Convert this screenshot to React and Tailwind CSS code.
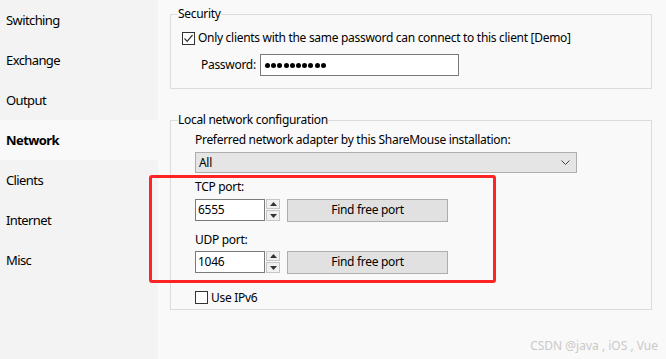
import React from 'react'

const navItems = ['Switching', 'Exchange', 'Output', 'Network', 'Clients', 'Internet', 'Misc']

function CheckBox({ checked }) {
  return (
    <span className="flex h-[13px] w-[13px] items-center justify-center border border-[#333333] bg-white">
      {checked && (
        <svg width="11" height="11" viewBox="0 0 11 11">
          <path d="M1.5 5.5 L4.2 8.3 L9.5 2" fill="none" stroke="#333333" strokeWidth="1.2" />
        </svg>
      )}
    </span>
  )
}

function Spinner() {
  return (
    <div className="ml-[1px] flex flex-col gap-[1px]">
      <div className="flex h-[10px] w-[14px] items-center justify-center border border-[#c6c6c6] bg-[#f0f0f0]">
        <svg width="7" height="4" viewBox="0 0 7 4"><path d="M0 4 L3.5 0 L7 4Z" fill="#333" /></svg>
      </div>
      <div className="flex h-[11px] w-[14px] items-center justify-center border border-[#c6c6c6] bg-[#f0f0f0]">
        <svg width="7" height="4" viewBox="0 0 7 4"><path d="M0 0 L3.5 4 L7 0Z" fill="#333" /></svg>
      </div>
    </div>
  )
}

function PortRow({ value }) {
  return (
    <div className="flex h-[22px] items-center">
      <div className="flex h-[22px] w-[70px] items-center border border-[#7a7a7a] bg-white pl-[2px]">{value}</div>
      <Spinner />
      <button className="ml-[7px] flex h-[23px] w-[161px] items-center justify-center border border-[#adadad] bg-[#e1e1e1]">
        Find free port
      </button>
    </div>
  )
}

export default function App() {
  const dots = Array.from({ length: 10 })

  return (
    <div
      className="relative flex h-[359px] w-[666px] overflow-hidden bg-[#f9f9f9] text-[12px] tracking-[-0.3px] text-black"
      style={{ fontFamily: '"Noto Sans", "Open Sans", sans-serif' }}
    >
      <div className="flex h-full w-[158px] shrink-0 flex-col bg-[#f3f3f3] text-[13px] tracking-[-0.6px]">
        {navItems.map((item) => (
          <div
            key={item}
            className={
              item === 'Network'
                ? 'flex h-[40px] items-center bg-[#f9f9f9] pl-[6px] pt-[2px] font-bold'
                : 'flex h-[40px] items-center pl-[6px] pt-[2px]'
            }
          >
            {item}
          </div>
        ))}
      </div>

      <div className="flex flex-1 flex-col pl-[12px] pr-[14px]">
        <fieldset className="mt-[6px] border border-[#dcdcdc] pb-[12px]">
          <legend className="ml-[7px] h-[16px] leading-[16px]">Security</legend>
          <div className="pl-[11px]">
            <div className="mt-[8px] flex h-[16px] items-center gap-[3px]">
              <CheckBox checked />
              <span>Only clients with the same password can connect to this client [Demo]</span>
            </div>
            <div className="mt-[8px] flex h-[22px] items-center pl-[19px]">
              <span className="w-[59px]">Password:</span>
              <div className="flex h-[22px] w-[199px] items-center gap-[1.2px] border border-[#7a7a7a] bg-white pl-[4px]">
                {dots.map((_, i) => (
                  <span key={i} className="h-[5px] w-[5px] rounded-full bg-black" />
                ))}
              </div>
            </div>
          </div>
        </fieldset>

        <fieldset className="mt-[23px] border border-[#dcdcdc] pb-[4px]">
          <legend className="ml-[7px] h-[16px] leading-[16px]">Local network configuration</legend>
          <div className="pl-[24px]">
            <div className="mt-[4px] h-[16px] leading-[16px]">Preferred network adapter by this ShareMouse installation:</div>
            <div className="mt-[4px] flex h-[21px] w-[382px] items-center justify-between border border-[#adadad] bg-[#e5e5e5] pl-[3px] pr-[6px]">
              <span>All</span>
              <svg width="9" height="5" viewBox="0 0 9 5"><path d="M0.5 0.5 L4.5 4.5 L8.5 0.5" fill="none" stroke="#444" strokeWidth="1" /></svg>
            </div>
            <div className="mt-[6px] h-[16px] leading-[16px]">TCP port:</div>
            <div className="mt-[4px]"><PortRow value="6555" /></div>
            <div className="mt-[11px] h-[16px] leading-[16px]">UDP port:</div>
            <div className="mt-[3px]"><PortRow value="1046" /></div>
            <div className="mt-[17px] flex h-[15px] items-center gap-[3px]">
              <CheckBox />
              <span>Use IPv6</span>
            </div>
          </div>
        </fieldset>
      </div>

      <div className="pointer-events-none absolute left-[149px] top-[175px] h-[108px] w-[347px] rounded-[3px] border-[3px] border-[#ff2424]" />
      <div className="absolute bottom-[4px] right-[8px] text-[12px] tracking-normal text-[#c9c9c9]">CSDN @java , iOS , Vue</div>
    </div>
  )
}
